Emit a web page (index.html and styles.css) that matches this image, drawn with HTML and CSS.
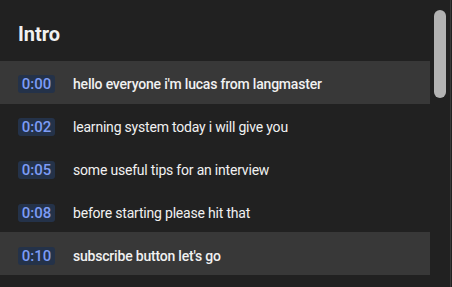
FILE: index.html
```html
<!DOCTYPE html>
<html lang="en">
<head>
    <meta charset="UTF-8">
    <meta name="viewport" content="width=device-width, initial-scale=1.0">
    <title>Transcript</title>
    <link rel="stylesheet" href="styles.css">
</head>
<body>
    <div class="panel">
        <div class="list">
            <div class="chapter">Intro</div>
            <div class="row active">
                <span class="time">0:00</span>
                <span class="line">hello everyone i'm lucas from langmaster</span>
            </div>
            <div class="row">
                <span class="time">0:02</span>
                <span class="line">learning system today i will give you</span>
            </div>
            <div class="row">
                <span class="time">0:05</span>
                <span class="line">some useful tips for an interview</span>
            </div>
            <div class="row">
                <span class="time">0:08</span>
                <span class="line">before starting please hit that</span>
            </div>
            <div class="row active">
                <span class="time">0:10</span>
                <span class="line">subscribe button let's go</span>
            </div>
        </div>
        <div class="scroll">
            <div class="thumb"></div>
        </div>
    </div>
</body>
</html>
```

FILE: styles.css
```css
body {
    margin: 0;
    background-color: #212121;
    font-family: Roboto, "Liberation Sans", Arial, sans-serif;
    color: #f1f1f1;
    overflow: hidden;
}
.panel {
    display: flex;
    width: 451px;
    height: 287px;
    border-right: 1px solid #3a3a3a;
    box-sizing: border-box;
}
.list {
    width: 430px;
}
.chapter {
    padding: 22px 0 0 18px;
    margin-bottom: 15px;
    font-size: 20px;
    line-height: 24px;
    font-weight: 700;
}
.row {
    display: flex;
    align-items: center;
    height: 42.8px;
    padding: 4px 0 0 18px;
    box-sizing: border-box;
    font-size: 14px;
}
.row.active {
    background-color: #383838;
    font-weight: 500;
}
.line {
    letter-spacing: -0.2px;
}
.time {
    width: 37px;
    height: 18px;
    line-height: 18px;
    text-align: center;
    border-radius: 3px;
    background-color: #243249;
    color: #7d9cf5;
    font-size: 15px;
    font-weight: 500;
    margin-right: 18px;
}
.scroll {
    flex: 1;
    padding: 10px 0 0 4px;
}
.thumb {
    width: 12px;
    height: 88px;
    border-radius: 6px;
    background-color: #b3b3b3;
}
```
